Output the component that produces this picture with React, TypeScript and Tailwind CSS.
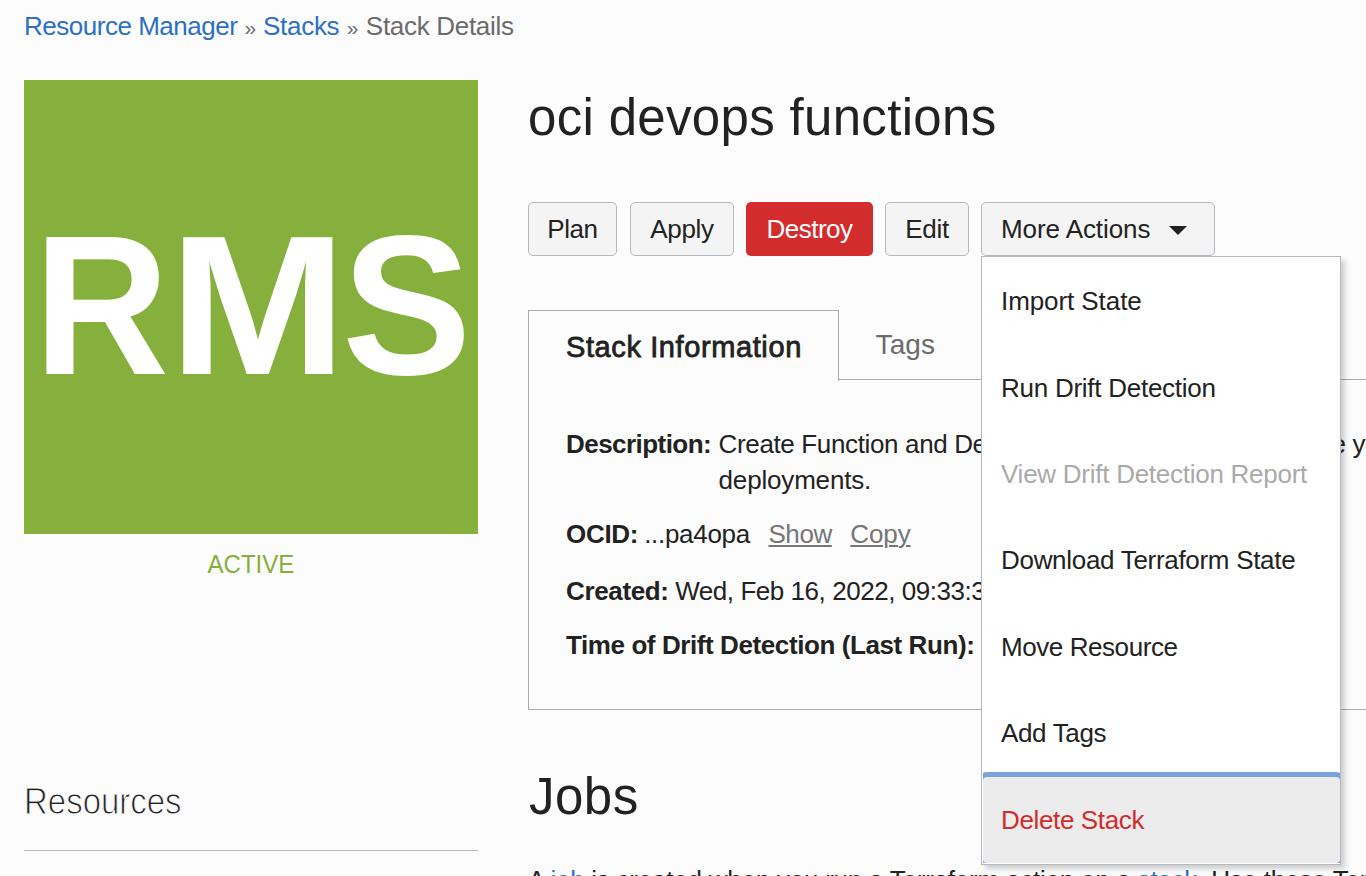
import React from "react";

const menuItems = [
  { label: "Import State", cls: "text-[#222] tracking-[-0.08px]" },
  { label: "Run Drift Detection", cls: "text-[#222] tracking-[-0.26px]" },
  { label: "View Drift Detection Report", cls: "text-[#aaa] tracking-[-0.26px]" },
  { label: "Download Terraform State", cls: "text-[#222] tracking-[-0.3px]" },
  { label: "Move Resource", cls: "text-[#222] tracking-[-0.43px]" },
  { label: "Add Tags", cls: "text-[#222] tracking-[-0.34px]" },
  {
    label: "Delete Stack",
    cls: "rounded-[4px] bg-[#ececec] text-[#d32c2d] tracking-[-0.36px] shadow-[0_0_0_5px_#7ba4db]",
  },
];

const buttonBase =
  "flex h-[54px] items-center rounded-[5px] border border-[#b3b8c1] bg-[#f4f4f4]";

function Breadcrumb() {
  return (
    <nav className="flex h-9 items-baseline leading-9 text-[#6b6b6b]">
      <a className="tracking-[-0.48px] text-[#2c70c7]">Resource Manager</a>
      <span className="ml-[7px] w-[12px] text-[21px]">»</span>
      <a className="ml-[6.5px] tracking-[-0.27px] text-[#2c70c7]">Stacks</a>
      <span className="ml-[7.5px] w-[12px] text-[21px]">»</span>
      <span className="ml-[7px] tracking-[-0.3px]">Stack Details</span>
    </nav>
  );
}

function Sidebar() {
  return (
    <aside className="w-[454px] shrink-0">
      <div className="flex h-[454px] items-center bg-[#85b03b] pb-[3px] text-[199px] leading-none font-bold text-white">
        <span className="ml-[9.5px] origin-left scale-x-[0.939]">R</span>
        <span className="ml-[-8px] origin-left scale-x-[1.071]">M</span>
        <span className="ml-[7.4px] origin-left scale-x-[0.975]">S</span>
      </div>
      <p className="mt-3 text-center text-[26px] leading-9 text-[#85b03b]">
        <span className="inline-block scale-x-[0.925]">ACTIVE</span>
      </p>
      <div className="mt-[195px] border-b border-[#b7b9c0] pb-[25px]">
        <h2 className="origin-left scale-x-[0.891] text-[37px] leading-[49px] -mb-px text-[#222] [-webkit-text-stroke:1px_#fcfcfc]">
          Resources
        </h2>
      </div>
    </aside>
  );
}

function MoreActions() {
  return (
    <div className="relative ml-3">
      <button className={`${buttonBase} w-[234px] pl-[19px]`}>
        <span className="tracking-[-0.08px]">More Actions</span>
        <svg className="mt-[3px] ml-[19px]" width="18" height="9" viewBox="0 0 18 9">
          <path d="M0 0H18L9 9Z" fill="#222" />
        </svg>
      </button>
      <div className="absolute top-full left-0 z-10 h-[609px] w-[360px] border border-[#b3b8c1] bg-white pb-px pl-px shadow-[4px_4px_5px_rgba(0,0,0,0.18)]">
        <ul className="h-full overflow-hidden pt-[1.5px]">
          {menuItems.map((item) => (
            <li key={item.label} className={`flex h-[86.4px] items-center pl-[18px] whitespace-nowrap ${item.cls}`}>
              {item.label}
            </li>
          ))}
        </ul>
      </div>
    </div>
  );
}

function StackPanel() {
  return (
    <section className="mt-[54px]">
      <div className="flex h-[70px]">
        <div className="h-[71px] w-[311px] shrink-0 border border-b-0 border-[#ababab] pl-[37px] text-[29px] leading-[72px] tracking-[0.6px] whitespace-nowrap [-webkit-text-stroke:0.8px_#222]">
          Stack Information
        </div>
        <div className="flex-1 border-b border-[#ababab] pl-[36.5px] text-[28px] leading-[69px] tracking-[0.15px] text-[#6b6b6b]">
          Tags
        </div>
      </div>
      <div className="h-[330px] border-b border-l border-[#ababab] pt-[46px] pl-[37px] leading-9 whitespace-nowrap">
        <div className="flex">
          <b className="tracking-[-0.55px]">Description:</b>
          <div className="ml-[7.5px]">
            <p>
              <span className="tracking-[-0.36px]">Create Function and DevOps </span>
              <span className="tracking-[1.1px]">pipelines that automat</span>
              <span className="tracking-[-0.36px]">e your</span>
            </p>
            <p className="tracking-[-0.18px]">deployments.</p>
          </div>
        </div>
        <div className="mt-[18px] flex">
          <b className="tracking-[-0.3px]">OCID:</b>
          <span className="ml-[6px] tracking-[-0.3px]">...pa4opa</span>
          <a className="ml-[18.5px] tracking-[-0.4px] text-[#767676] underline decoration-2 underline-offset-2">Show</a>
          <a className="ml-[18.5px] tracking-[-0.13px] text-[#767676] underline decoration-2 underline-offset-2">Copy</a>
        </div>
        <div className="mt-[21px] flex">
          <b className="tracking-[-0.35px]">Created:</b>
          <span className="ml-[6.5px] tracking-[-0.45px]">Wed, Feb 16, 2022, 09:33:30 UTC</span>
        </div>
        <div className="mt-[18px]">
          <b className="tracking-[-0.41px]">Time of Drift Detection (Last Run):</b>
        </div>
      </div>
    </section>
  );
}

export default function App() {
  return (
    <div className="h-[876px] overflow-hidden bg-[#fcfcfc] pt-2 pl-6 font-['Liberation_Sans',Arial,sans-serif] text-[26px] text-[#222]">
      <Breadcrumb />
      <div className="mt-9 flex">
        <Sidebar />
        <main className="ml-[50px] min-w-0 flex-1">
          <h1 className="mt-[6px] text-[51px] leading-[64px] tracking-[0.32px]">oci devops functions</h1>
          <div className="mt-[52px] flex">
            <button className={`${buttonBase} w-[89px] justify-center tracking-[-0.43px]`}>Plan</button>
            <button className={`${buttonBase} ml-[13px] w-[104px] justify-center tracking-[-0.26px]`}>Apply</button>
            <button className="ml-3 flex h-[54px] w-[127px] items-center justify-center rounded-[5px] bg-[#d32c2d] tracking-[-0.5px] text-white">
              Destroy
            </button>
            <button className={`${buttonBase} ml-3 w-[84px] justify-center tracking-[-0.29px]`}>Edit</button>
            <MoreActions />
          </div>
          <StackPanel />
          <h1 className="mt-[55px] ml-px text-[51px] leading-[64px] tracking-[0.5px]">Jobs</h1>
          <p className="mt-[33px] leading-9 tracking-[-0.23px] whitespace-nowrap">
            <span className="tracking-[-0.3px]">
              A <a className="text-[#2c70c7]">job</a>{" "}
            </span>
            is created when you run a Terraform action on a <a className="text-[#2c70c7]">stack</a>. Use these Terraform
            actions
          </p>
        </main>
      </div>
    </div>
  );
}
